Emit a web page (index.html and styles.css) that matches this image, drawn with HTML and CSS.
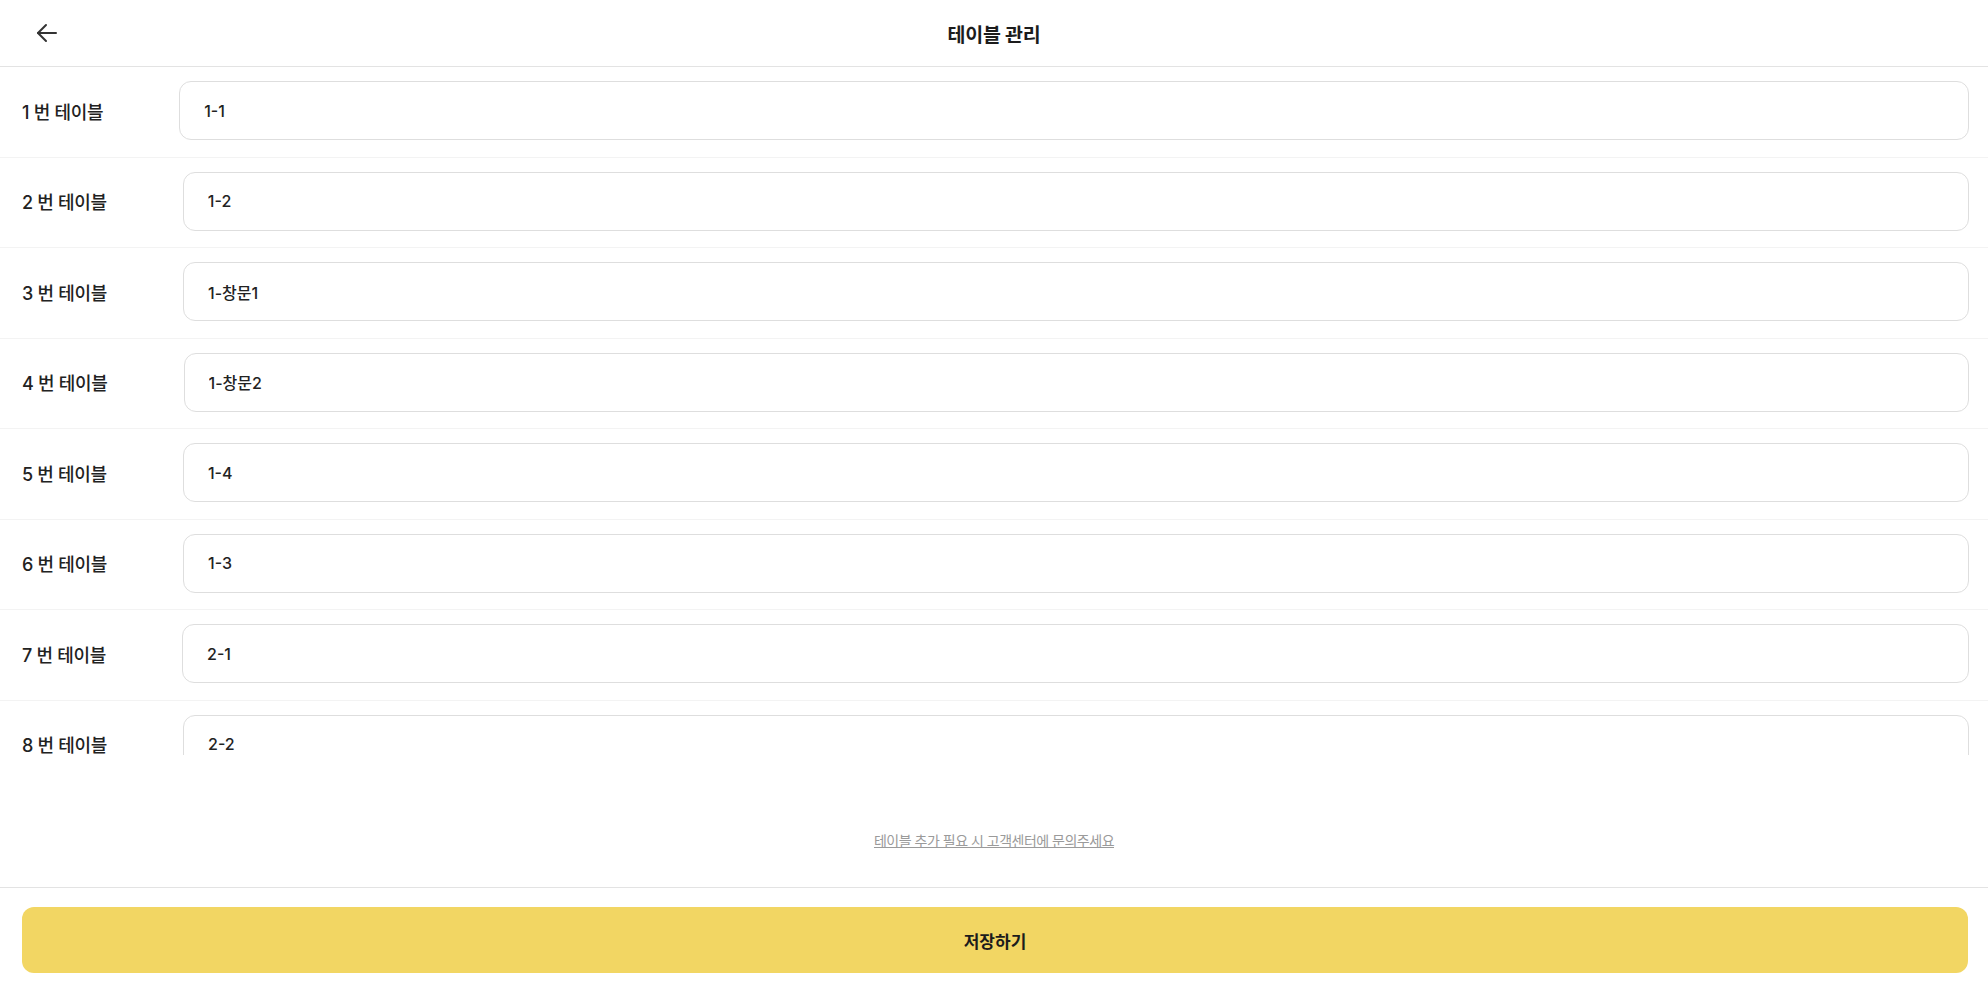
FILE: index.html
```html
<!DOCTYPE html>
<html lang="ko">
<head>
    <meta charset="UTF-8">
    <meta name="viewport" content="width=device-width, initial-scale=1.0">
    <title>테이블 관리</title>
    <link rel="stylesheet" href="styles.css">
</head>
<body>
    <div class="page">
        <header class="topbar">
            <button class="back-btn" aria-label="뒤로">
                <svg width="24" height="22" viewBox="0 0 24 22" fill="none" stroke="#333" stroke-width="2" stroke-linecap="round" stroke-linejoin="round">
                    <path d="M21 11H3"/>
                    <path d="M11 3L3 11L11 19"/>
                </svg>
            </button>
            <h1 class="title">테이블 관리</h1>
        </header>

        <div class="table-list">
            <div class="table-row">
                <label class="table-label" for="t1">1 번 테이블</label>
                <input class="table-input" id="t1" type="text" value="1-1">
            </div>
            <div class="table-row">
                <label class="table-label" for="t2">2 번 테이블</label>
                <input class="table-input" id="t2" type="text" value="1-2">
            </div>
            <div class="table-row">
                <label class="table-label" for="t3">3 번 테이블</label>
                <input class="table-input" id="t3" type="text" value="1-창문1">
            </div>
            <div class="table-row">
                <label class="table-label" for="t4">4 번 테이블</label>
                <input class="table-input" id="t4" type="text" value="1-창문2">
            </div>
            <div class="table-row">
                <label class="table-label" for="t5">5 번 테이블</label>
                <input class="table-input" id="t5" type="text" value="1-4">
            </div>
            <div class="table-row">
                <label class="table-label" for="t6">6 번 테이블</label>
                <input class="table-input" id="t6" type="text" value="1-3">
            </div>
            <div class="table-row">
                <label class="table-label" for="t7">7 번 테이블</label>
                <input class="table-input" id="t7" type="text" value="2-1">
            </div>
            <div class="table-row">
                <label class="table-label" for="t8">8 번 테이블</label>
                <input class="table-input" id="t8" type="text" value="2-2">
            </div>
        </div>

        <div class="notice">
            <a class="notice-link" href="#">테이블 추가 필요 시 고객센터에 문의주세요</a>
        </div>

        <footer class="bottom">
            <button class="save-btn">저장하기</button>
        </footer>
    </div>
</body>
</html>
```

FILE: styles.css
```css
body {
    margin: 0;
    font-family: Inter, "Noto Sans CJK KR", sans-serif;
    color: #222;
    background: #fff;
}
.page {
    display: flex;
    flex-direction: column;
    height: 100vh;
}
.topbar {
    position: relative;
    display: flex;
    align-items: center;
    justify-content: center;
    height: 66px;
    border-bottom: 1px solid #e3e3e3;
    flex: none;
}
.back-btn {
    position: absolute;
    left: 35px;
    top: 22px;
    padding: 0;
    border: none;
    background: none;
    cursor: pointer;
    display: flex;
}
.title { margin: 0; font-size: 19.5px; font-weight: 700; color: #1c1c1c; letter-spacing: -0.2px; }

.table-list {
    flex: 1;
    overflow-y: auto;
    scrollbar-width: none;
}
.table-row {
    display: flex;
    align-items: center;
    gap: 76px;
    padding: 14px 19px 16.5px 22px;
    border-bottom: 1px solid #f3f3f3;
}
.table-label { flex: none; font-size: 18px; font-weight: 500; color: #222; letter-spacing: -0.3px; }
.table-input {
    flex: 1;
    min-width: 0;
    height: 59px;
    box-sizing: border-box;
    padding: 0 24px;
    border: 1px solid #dedede;
    border-radius: 12px;
    font-family: Inter, "Noto Sans CJK KR", sans-serif;
    font-size: 16px;
    font-weight: 500;
    color: #222;
    background: #fff;
    outline: none;
}

.notice {
    flex: none;
    height: 132px;
    display: flex;
    justify-content: center;
    align-items: flex-end;
    padding-bottom: 38px;
    box-sizing: border-box;
}
.notice-link { font-size: 14px; line-height: 17px; color: #9a9a9a; text-decoration: underline; letter-spacing: -0.5px; }

.bottom {
    flex: none;
    border-top: 1px solid #e3e3e3;
    padding: 19px 20px 33px 22px;
}
.save-btn {
    width: 100%;
    height: 66px;
    border: none;
    border-radius: 12px;
    background-color: #f2d663;
    font-family: Inter, "Noto Sans CJK KR", sans-serif;
    font-size: 17px;
    font-weight: 700;
    color: #1c1c1c;
    cursor: pointer;
}
```
